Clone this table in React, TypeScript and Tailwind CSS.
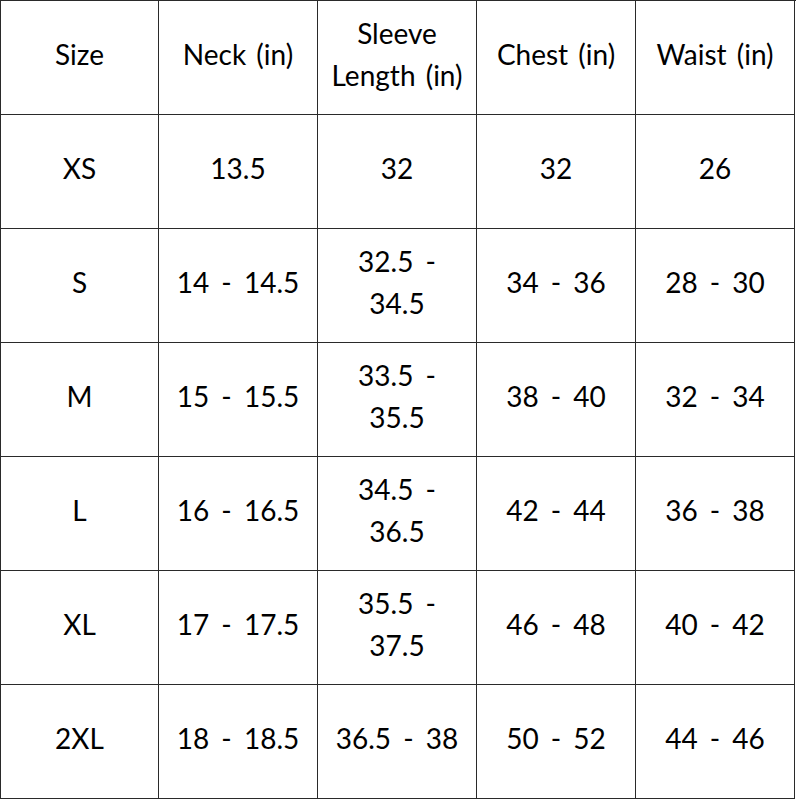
const headers = ["Size", "Neck (in)", "Sleeve\nLength (in)", "Chest (in)", "Waist (in)"];

const rows: string[][] = [
  ["XS", "13.5", "32", "32", "26"],
  ["S", "14 - 14.5", "32.5 -\n34.5", "34 - 36", "28 - 30"],
  ["M", "15 - 15.5", "33.5 -\n35.5", "38 - 40", "32 - 34"],
  ["L", "16 - 16.5", "34.5 -\n36.5", "42 - 44", "36 - 38"],
  ["XL", "17 - 17.5", "35.5 -\n37.5", "46 - 48", "40 - 42"],
  ["2XL", "18 - 18.5", "36.5 - 38", "50 - 52", "44 - 46"],
];

function Cell({ text, header }: { text: string; header?: boolean }) {
  return (
    <div className="flex h-[114px] items-center justify-center border-b border-r border-[#2a2a2a] px-2 pb-2 text-center">
      <span
        className={`whitespace-pre-line text-[28px] leading-[42px] text-black ${
          header ? "[word-spacing:3px]" : "[word-spacing:5px]"
        }`}
      >
        {text}
      </span>
    </div>
  );
}

export default function App() {
  return (
    <div className="h-[800px] w-[800px] bg-white" style={{ fontFamily: "Lato, 'Open Sans', sans-serif" }}>
      <div className="grid w-[796px] grid-cols-[158px_159px_159px_159px_159px] border-l border-t border-[#2a2a2a]">
        {headers.map((h) => (
          <Cell key={h} text={h} header />
        ))}
        {rows.map((r) => r.map((c, i) => <Cell key={r[0] + i} text={c} />))}
      </div>
    </div>
  );
}
